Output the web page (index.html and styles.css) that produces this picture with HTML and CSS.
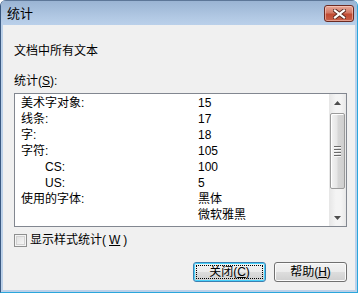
FILE: index.html
```html
<!DOCTYPE html>
<html lang="zh-CN">
<head>
    <meta charset="UTF-8">
    <title>统计</title>
    <link rel="stylesheet" href="styles.css">
</head>
<body>
    <div class="window">
        <div class="titlebar">
            <span class="title">统计</span>
            <div class="close-btn">
                <svg width="13" height="10" viewBox="0 0 13 10">
                    <path d="M2 1.5 L11 8.5 M11 1.5 L2 8.5" stroke="#5b2a22" stroke-width="4" stroke-linecap="square"/>
                    <path d="M2 1.5 L11 8.5 M11 1.5 L2 8.5" stroke="#ffffff" stroke-width="2.2" stroke-linecap="square"/>
                </svg>
            </div>
        </div>
        <div class="frame">
            <div class="client">
                <p class="doc-line">文档中所有文本</p>
                <p class="list-label">统计(<u>S</u>):</p>

                <div class="listbox">
                    <div class="rows">
                        <div class="row"><span class="key">美术字对象:</span><span class="val">15</span></div>
                        <div class="row"><span class="key">线条:</span><span class="val">17</span></div>
                        <div class="row"><span class="key">字:</span><span class="val">18</span></div>
                        <div class="row"><span class="key">字符:</span><span class="val">105</span></div>
                        <div class="row"><span class="key sub">CS:</span><span class="val">100</span></div>
                        <div class="row"><span class="key sub">US:</span><span class="val">5</span></div>
                        <div class="row"><span class="key">使用的字体:</span><span class="val">黑体</span></div>
                        <div class="row"><span class="key"></span><span class="val">微软雅黑</span></div>
                    </div>
                    <div class="scrollbar">
                        <div class="sb-arrow">
                            <svg width="7" height="4" viewBox="0 0 7 4"><path d="M3.5 0 L7 4 L0 4 Z" fill="#4d4d4d"/></svg>
                        </div>
                        <div class="sb-thumb">
                            <div class="grip"><span></span><span></span><span></span><span></span></div>
                        </div>
                        <div class="sb-track"></div>
                        <div class="sb-arrow">
                            <svg width="7" height="4" viewBox="0 0 7 4"><path d="M0 0 L7 0 L3.5 4 Z" fill="#4d4d4d"/></svg>
                        </div>
                    </div>
                </div>

                <label class="check-row"><span class="checkbox"></span>显示样式统计(<u>W</u>)</label>

                <div class="buttons">
                    <button class="btn default">关闭(<u>C</u>)</button>
                    <button class="btn">帮助(<u>H</u>)</button>
                </div>
            </div>
        </div>
    </div>
</body>
</html>
```

FILE: styles.css
```css
body {
    margin: 0;
    width: 360px;
    height: 294px;
    background-color: #ffffff;
    font-family: "Liberation Sans", "Noto Sans CJK SC", sans-serif;
    font-size: 12px;
    line-height: 16px;
    color: #000000;
}
.window {
    width: 358px;
    height: 293px;
    box-sizing: border-box;
    display: flex;
    flex-direction: column;
    border-left: 1px solid #3b5a82;
    border-right: 1px solid #2aa6dc;
    border-bottom: 1px solid #2aa6dc;
    border-radius: 6px 6px 0 0;
    overflow: hidden;
    background: #bcd1e9;
}
.titlebar {
    height: 25px;
    flex-shrink: 0;
    display: flex;
    justify-content: space-between;
    align-items: flex-start;
    padding: 0 3px 0 6px;
    background: linear-gradient(#9ab4d3, #b2c9e4 70%, #bad0ea);
    border-top: 1px solid #5d7798;
    box-sizing: border-box;
}
.title {
    margin-top: 5px;
    font-size: 13px;
}
.close-btn {
    width: 30px;
    height: 17px;
    margin-top: 4px;
    box-sizing: border-box;
    border: 1px solid #6b2a22;
    border-radius: 3px;
    background: linear-gradient(#e8a797, #d27a67 45%, #c04a32 55%, #c8614b);
    box-shadow: inset 0 0 0 1px rgba(255, 220, 210, 0.5);
    display: flex;
    align-items: center;
    justify-content: center;
}
.frame {
    flex: 1;
    display: flex;
    padding: 0 2px 2px 2px;
}
.client {
    flex: 1;
    background-color: #f0f0f0;
    padding: 18px 8px 0 11px;
}
.doc-line {
    margin: 0;
}
.list-label {
    margin: 14px 0 0 0;
}
.listbox {
    margin-top: 4px;
    height: 134px;
    box-sizing: border-box;
    border: 1px solid #828790;
    background: #ffffff;
    display: flex;
}
.rows {
    flex: 1;
    padding: 1px 0 0 6px;
}
.row {
    display: flex;
    height: 16px;
}
.key {
    width: 177px;
}
.key.sub {
    padding-left: 24px;
    box-sizing: border-box;
}
.scrollbar {
    width: 17px;
    display: flex;
    flex-direction: column;
    background: linear-gradient(90deg, #e6e6e6, #f4f4f4 40%, #f4f4f4 70%, #e8e8e8);
}
.sb-arrow {
    height: 17px;
    display: flex;
    align-items: center;
    justify-content: center;
}
.sb-thumb {
    margin: 2px 1px 0 1px;
    height: 76px;
    box-sizing: border-box;
    border: 1px solid #9b9b9b;
    border-radius: 2px;
    background: linear-gradient(90deg, #f3f3f3, #e6e6e6 45%, #d6d6d6 55%, #cfcfcf);
    box-shadow: inset 1px 1px 0 #ffffff;
    display: flex;
    align-items: center;
    justify-content: center;
}
.grip {
    display: flex;
    flex-direction: column;
    gap: 1px;
}
.grip span {
    display: block;
    width: 7px;
    height: 1px;
    background: #6a6a6a;
    border-bottom: 1px solid #f8f8f8;
}
.sb-track {
    flex: 1;
}
.check-row {
    margin-top: 5px;
    display: flex;
    align-items: center;
    gap: 3px;
    height: 16px;
}
.checkbox {
    width: 13px;
    height: 13px;
    box-sizing: border-box;
    border: 1px solid #8e8f8f;
    background: linear-gradient(135deg, #dcdcdc, #fbfbfb);
    box-shadow: inset 0 0 0 1px #f4f4f4, inset 0 0 0 2px #d2d2d2;
}
.buttons {
    margin-top: 14px;
    display: flex;
    justify-content: flex-end;
    gap: 8px;
}
.btn {
    width: 73px;
    height: 20px;
    padding: 0;
    font-family: inherit;
    font-size: 12px;
    line-height: 16px;
    color: #000000;
    border: 1px solid #707070;
    border-radius: 3px;
    background: linear-gradient(#f2f2f2, #ebebeb 50%, #dddddd 51%, #cfcfcf);
    box-shadow: inset 0 0 0 1px #fbfbfb;
}
.btn.default {
    border-color: #3c7fb1;
    box-shadow: inset 0 0 0 1px #48d2fb;
    outline: 1px dotted #000000;
    outline-offset: -4px;
}
```
